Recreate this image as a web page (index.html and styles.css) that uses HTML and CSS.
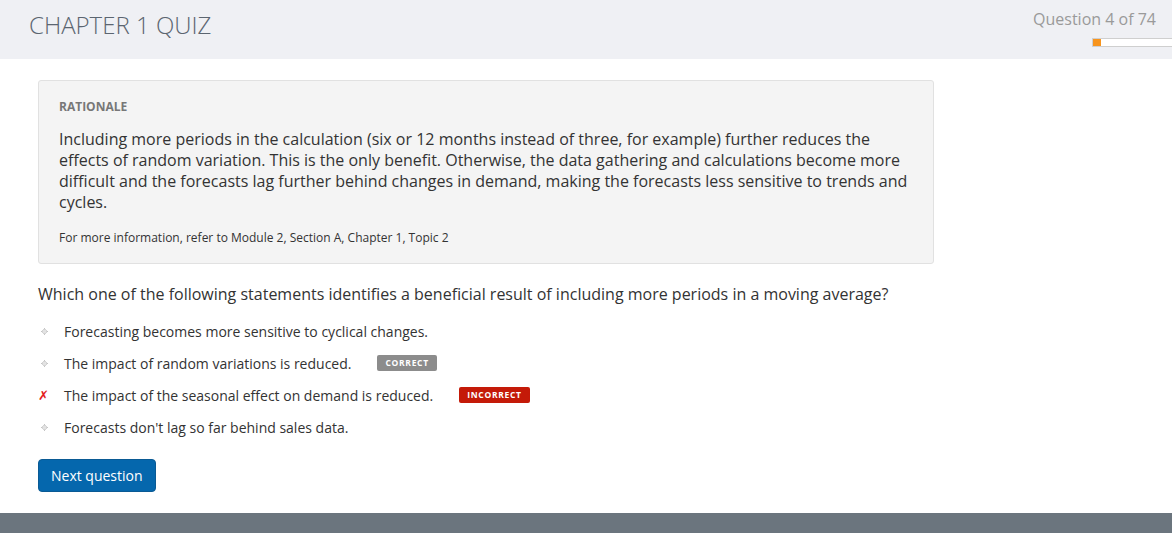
FILE: index.html
```html
<!DOCTYPE html>
<html lang="en">
<head>
<meta charset="utf-8">
<title>Chapter 1 Quiz</title>
<link rel="stylesheet" href="styles.css">
</head>
<body>
<header class="topbar">
  <h1 class="title">CHAPTER 1 QUIZ</h1>
  <div class="progress-wrap">
    <div class="progress-label">Question 4 of 74</div>
    <div class="progress"><div class="progress-fill" style="width:8px"></div></div>
  </div>
</header>
<main class="content">
  <section class="rationale">
    <h2 class="rationale-title">RATIONALE</h2>
    <p class="rationale-text">Including more periods in the calculation (six or 12 months instead of three, for example) further reduces the effects of random variation. This is the only benefit. Otherwise, the data gathering and calculations become more difficult and the forecasts lag further behind changes in demand, making the forecasts less sensitive to trends and cycles.</p>
    <p class="rationale-ref">For more information, refer to Module 2, Section A, Chapter 1, Topic 2</p>
  </section>
  <p class="question">Which one of the following statements identifies a beneficial result of including more periods in a moving average?</p>
  <ul class="options">
    <li class="option"><span class="mark"><svg width="7" height="7" viewBox="0 0 7 7"><rect x="3" y="0" width="1" height="1" fill="#c4c4c4"/><rect x="0" y="3" width="1" height="1" fill="#c4c4c4"/><rect x="6" y="3" width="1" height="1" fill="#c4c4c4"/><rect x="3" y="6" width="1" height="1" fill="#c4c4c4"/><rect x="2" y="2" width="3" height="3" fill="#e2e2e2"/><rect x="1" y="2" width="1" height="3" fill="#d4d4d4"/><rect x="5" y="2" width="1" height="3" fill="#d4d4d4"/><rect x="2" y="1" width="3" height="1" fill="#d4d4d4"/><rect x="2" y="5" width="3" height="1" fill="#d4d4d4"/></svg></span><span class="opt-text">Forecasting becomes more sensitive to cyclical changes.</span></li>
    <li class="option"><span class="mark"><svg width="7" height="7" viewBox="0 0 7 7"><rect x="3" y="0" width="1" height="1" fill="#c4c4c4"/><rect x="0" y="3" width="1" height="1" fill="#c4c4c4"/><rect x="6" y="3" width="1" height="1" fill="#c4c4c4"/><rect x="3" y="6" width="1" height="1" fill="#c4c4c4"/><rect x="2" y="2" width="3" height="3" fill="#e2e2e2"/><rect x="1" y="2" width="1" height="3" fill="#d4d4d4"/><rect x="5" y="2" width="1" height="3" fill="#d4d4d4"/><rect x="2" y="1" width="3" height="1" fill="#d4d4d4"/><rect x="2" y="5" width="3" height="1" fill="#d4d4d4"/></svg></span><span class="opt-text">The impact of random variations is reduced.</span><span class="badge badge-correct">CORRECT</span></li>
    <li class="option"><span class="mark mark-wrong">✗</span><span class="opt-text">The impact of the seasonal effect on demand is reduced.</span><span class="badge badge-incorrect">INCORRECT</span></li>
    <li class="option"><span class="mark"><svg width="7" height="7" viewBox="0 0 7 7"><rect x="3" y="0" width="1" height="1" fill="#c4c4c4"/><rect x="0" y="3" width="1" height="1" fill="#c4c4c4"/><rect x="6" y="3" width="1" height="1" fill="#c4c4c4"/><rect x="3" y="6" width="1" height="1" fill="#c4c4c4"/><rect x="2" y="2" width="3" height="3" fill="#e2e2e2"/><rect x="1" y="2" width="1" height="3" fill="#d4d4d4"/><rect x="5" y="2" width="1" height="3" fill="#d4d4d4"/><rect x="2" y="1" width="3" height="1" fill="#d4d4d4"/><rect x="2" y="5" width="3" height="1" fill="#d4d4d4"/></svg></span><span class="opt-text">Forecasts don't lag so far behind sales data.</span></li>
  </ul>
  <button class="btn-next" type="button">Next question</button>
</main>
<footer class="footer"></footer>
</body>
</html>
```
FILE: styles.css
```css
* { box-sizing: border-box; }
html, body { margin: 0; padding: 0; }
body {
  font-family: "Open Sans", "Liberation Sans", sans-serif;
  color: #333;
  background: #fff;
  width: 1172px;
  height: 533px;
  overflow: hidden;
  display: flex;
  flex-direction: column;
}
.topbar {
  background: #eff0f4;
  height: 59px;
  display: flex;
  justify-content: space-between;
  align-items: flex-start;
  flex: none;
}
.title {
  margin: 9px 0 0 29px;
  font-size: 24px;
  font-weight: 300;
  color: #5b6570;
  line-height: 32px;
}
.progress-wrap {
  display: flex;
  flex-direction: column;
  align-items: flex-end;
  padding-top: 8px;
}
.progress-label {
  font-size: 16px;
  color: #9a9a9a;
  line-height: 22px;
  margin-right: 16px;
}
.progress {
  margin-top: 8px;
  width: 80px;
  height: 9px;
  background: #fff;
  border: 1px solid #cfcfcf;
  border-right: none;
}
.progress-fill {
  height: 100%;
  background: #f7941d;
}
.content {
  flex: 1;
  padding: 21px 0 0 38px;
  width: 934px;
}
.rationale {
  background: #f4f4f4;
  border: 1px solid #e1e1e1;
  border-radius: 3px;
  padding: 18px 20px 17px 20px;
}
.rationale-title {
  margin: 0;
  font-size: 12px;
  font-weight: 700;
  color: #777;
  line-height: 16px;
}
.rationale-text {
  margin: 14px 0 0;
  font-size: 16px;
  line-height: 21px;
  color: #333;
}
.rationale-ref {
  margin: 17px 0 0;
  font-size: 12px;
  line-height: 16px;
  color: #333;
}
.question {
  margin: 19px 0 0;
  font-size: 16px;
  line-height: 22px;
  color: #333;
}
.options {
  list-style: none;
  margin: 10px 0 0;
  padding: 0;
}
.option {
  display: flex;
  align-items: center;
  height: 32px;
  font-size: 14px;
}
.mark {
  width: 26px;
  display: flex;
  align-items: center;
  padding-left: 3px;
}
.mark-wrong {
  color: #e41d1d;
  font-size: 13px;
  font-weight: 700;
  padding-left: 0;
  font-family: "DejaVu Sans", sans-serif;
}
.opt-text { color: #333; }
.badge {
  margin-left: 26px;
  height: 16px;
  border-radius: 2px;
  color: #fff;
  font-size: 8.5px;
  font-weight: 700;
  letter-spacing: 0.7px;
  line-height: 16px;
  padding: 0 8px;
  display: inline-flex;
  align-items: center;
}
.badge-correct { background: #8c8c8c; }
.badge-incorrect { background: #c41a08; }
.btn-next {
  margin-top: 16px;
  background: #0567ad;
  color: #fff;
  border: 1px solid #0a5a94;
  border-radius: 4px;
  font-family: "Open Sans", "Liberation Sans", sans-serif;
  font-size: 14px;
  height: 33px;
  padding: 0 12px;
  cursor: pointer;
}
.footer {
  height: 20px;
  background: #6b757e;
  flex: none;
}
```
